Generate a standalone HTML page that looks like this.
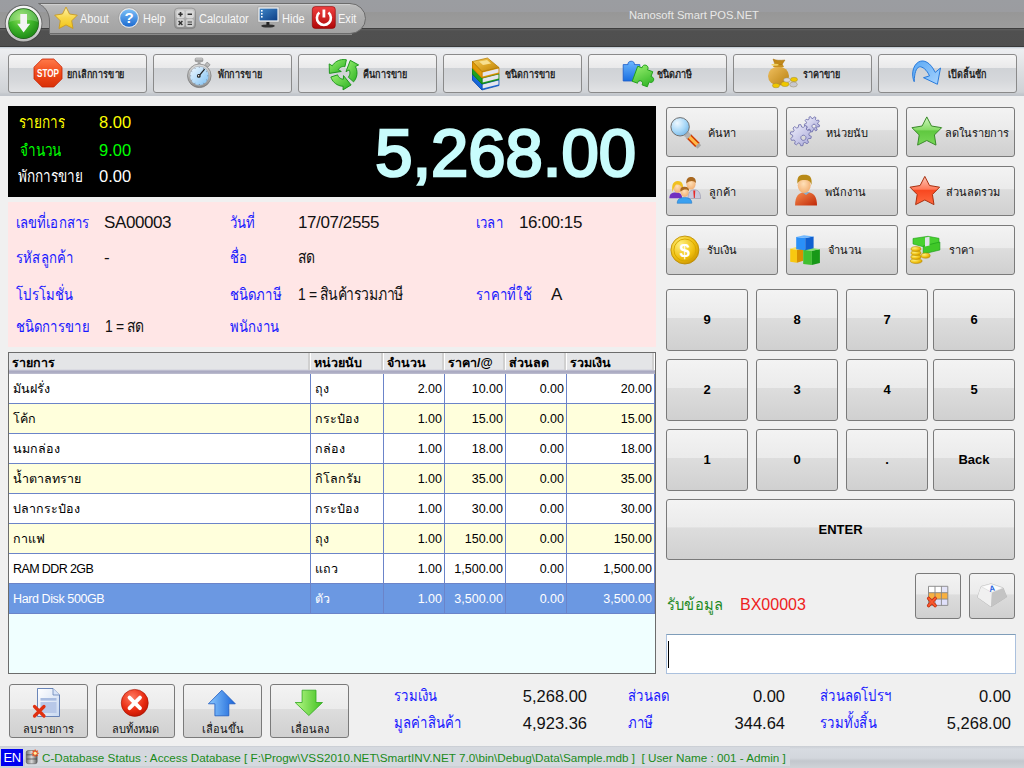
<!DOCTYPE html>
<html><head><meta charset="utf-8">
<style>
*{margin:0;padding:0;box-sizing:border-box}
html,body{width:1024px;height:768px;overflow:hidden;background:#f0f0f0;font-family:"Liberation Sans",sans-serif;position:relative}
.a{position:absolute}
#title{left:0;top:0;width:1024px;height:48px;background:linear-gradient(#9b9da1 0px,#9b9ca0 12px,#979797 12px,#9c9c9c 28.5px,#3e3e3e 28.5px,#3e3e3e 29.5px,#5c5c5c 29.5px,#505050 31px,#4f4f4f 46.5px,#3a3a3a 46.5px,#3a3a3a 47.5px,#c8d0d8 47.5px,#c8d0d8 48px)}
#apptitle{left:561px;top:9px;width:266px;text-align:center;font-size:11.2px;color:#e8e8e8}
.mi{font-size:12px;line-height:14px;color:#f6f6f6;top:12px;transform:scaleX(0.92);transform-origin:0 50%}
#tb{left:0;top:48px;width:1024px;height:48px;background:linear-gradient(#d8dde2 0px,#eceef1 1px,#e9eaec 8px,#dcdee1 24px,#cfd2d6 44px,#c4c8cd 46px,#c0c4ca 48px)}
.btn{position:absolute;border:1px solid #7a7a7a;border-radius:3px;background:linear-gradient(#f3f3f3 0%,#ebebeb 46%,#dddddd 47%,#d0d0d0 100%)}
.tbb{top:54px;width:139px;height:39px;border-color:#8a8a8a;background:linear-gradient(#f5f5f5 0%,#e9e9ea 35%,#cfd2d6 36%,#d6d8db 70%,#e2e3e5 100%)}
.tbt{position:absolute;top:12px;font-size:11px;color:#111}
#disp{left:8px;top:106px;width:648px;height:91px;background:#000}
.dl{font-size:16.5px}
#big{left:300px;top:117px;width:336px;text-align:right;font-size:67px;font-weight:normal;-webkit-text-stroke:2.6px #c8fcfc;color:#c8fcfc;line-height:72px}
#info{left:8px;top:202px;width:648px;height:145px;background:#ffe6e6}
.il{font-size:16px;color:#1a1aff}
.iv{font-size:17px;letter-spacing:-0.4px;color:#111}
#grid{left:8px;top:352px;width:648px;height:322px;border:1px solid #6c6c6c;background:#f0ffff;overflow:hidden}
.fb{width:112px;height:50px}
.kp{width:82px;height:62px;font-size:13px;font-weight:bold;text-align:center;line-height:60px;color:#000}
.bb{top:684px;width:79px;height:54px}
.sl{font-size:16px;color:#1a1aff}
.sv{font-size:16.5px;color:#111;text-align:right}
#status{left:0;top:746px;width:1024px;height:22px;background:linear-gradient(#c9cdd3 0,#d7dbe1 3px,#d3d7dd 12px,#c3c7cd 15px,#cfd3d8 22px)}
.gh{position:absolute;left:0;top:0;width:646px;height:21px;background:linear-gradient(#e4e5e7 0,#e4e5e7 16px,#d0d0dc 17px,#a8a8c0 18px,#b0b0c6 20px,#c4c4d4 21px)}
.ghc{position:absolute;top:0;height:17px;font-size:12.5px;line-height:21px;padding-left:3px;color:#000;font-weight:bold;border-right:1px solid #fff;box-shadow:inset -2px 0 0 #d0d0d0}
.gr{position:absolute;left:0;width:646px;height:30px;background:#fff;border-bottom:1px solid #6b84c9}
.gr.alt{background:#ffffdc}
.gr.sel{background:#6b98e2;color:#fff}
.gr.sel .gc{color:#fff}
.gc{position:absolute;top:0;height:29px;font-size:12.5px;line-height:31px;color:#000;border-right:1px solid #6b84c9;white-space:nowrap;overflow:hidden}
.gc.l{padding-left:4px}
.gc.r{text-align:right;padding-right:2px}
.tl{top:66px;font-size:11px;line-height:16px;color:#111;white-space:nowrap;-webkit-text-stroke:0.3px #111}
.fl{font-size:11px;line-height:16px;color:#111;white-space:nowrap}
.bl{top:721px;width:79px;text-align:center;font-size:11px;line-height:16px;color:#111;white-space:nowrap}
.sx{transform:scaleX(0.82);transform-origin:0 50%;white-space:nowrap}
</style></head><body>
<div id="title" class="a"></div>
<svg class="a" style="left:0;top:0" width="380" height="48" viewBox="0 0 380 48">
<defs>
<linearGradient id="pillg" x1="0" y1="0" x2="0" y2="1"><stop offset="0" stop-color="#c4c4c4"/><stop offset="0.12" stop-color="#b9b9b9"/><stop offset="0.45" stop-color="#acacac"/><stop offset="1" stop-color="#a3a3a3"/></linearGradient>
<linearGradient id="ringg" x1="0" y1="0" x2="0" y2="1"><stop offset="0" stop-color="#f8f8f8"/><stop offset="0.6" stop-color="#e0e0e0"/><stop offset="1" stop-color="#b8b8b8"/></linearGradient>
<radialGradient id="greeng" cx="0.4" cy="0.3" r="0.8"><stop offset="0" stop-color="#8ee05a"/><stop offset="0.5" stop-color="#3fb52a"/><stop offset="1" stop-color="#177f12"/></radialGradient>
<linearGradient id="starg" x1="0" y1="0" x2="0" y2="1"><stop offset="0" stop-color="#fff3b0"/><stop offset="0.5" stop-color="#f9d84a"/><stop offset="1" stop-color="#f0c419"/></linearGradient>
<linearGradient id="helpg" x1="0" y1="0" x2="0" y2="1"><stop offset="0" stop-color="#7cc0f8"/><stop offset="1" stop-color="#1c6ad0"/></linearGradient>
<linearGradient id="calcg" x1="0" y1="0" x2="0" y2="1"><stop offset="0" stop-color="#c9c9c9"/><stop offset="1" stop-color="#8e8e8e"/></linearGradient>
<linearGradient id="scrg" x1="0" y1="0" x2="1" y2="1"><stop offset="0" stop-color="#3f86c8"/><stop offset="1" stop-color="#0d3f86"/></linearGradient>
<linearGradient id="exitg" x1="0" y1="0" x2="0" y2="1"><stop offset="0" stop-color="#f04040"/><stop offset="1" stop-color="#b00808"/></linearGradient>
</defs>
<path d="M38.5,3.5 H350 A15.5,15 0 0 1 350,33.5 H49.5 V21 C49.5,12 44,6 38.5,3.5 Z" fill="url(#pillg)" stroke="#6c6c6c" stroke-width="1"/>
<path d="M41,4.5 H350" stroke="#cfcfcf" stroke-width="1"/>
<path d="M50,34.5 H352" stroke="#8a8a8a" stroke-width="1"/>
<circle cx="23.6" cy="23.6" r="18.8" fill="#3a3a3a" opacity="0.6"/>
<circle cx="23.6" cy="23.6" r="17.9" fill="url(#ringg)"/>
<circle cx="23.6" cy="23.6" r="15.3" fill="#1f5a18"/>
<circle cx="23.6" cy="23.6" r="14.7" fill="url(#greeng)"/>
<path d="M9.2,22 A14.5,14.5 0 0 1 38,22 C30,19 18,19 9.2,22 Z" fill="#ffffff" opacity="0.22"/>
<path d="M20.3,14 H27 V23.8 H30.2 L23.6,32.4 L17.2,23.8 H20.3 Z" fill="#f4f4f4"/>
<path d="M66.0,7.0 L69.5,14.0 L77.3,15.2 L71.7,20.8 L73.0,28.5 L66.0,24.9 L59.0,28.5 L60.3,20.8 L54.7,15.2 L62.5,14.0 Z" fill="url(#starg)" stroke="#c89a20" stroke-width="0.9" stroke-linejoin="round"/>
<circle cx="129" cy="18" r="10.4" fill="#e8e8e8" stroke="#8a8a8a" stroke-width="0.6"/>
<circle cx="129" cy="18" r="8.8" fill="url(#helpg)"/>
<text x="129" y="23.2" font-family="Liberation Sans" font-weight="bold" font-size="15" fill="#fff" text-anchor="middle">?</text>
<rect x="174.5" y="8.2" width="21" height="20.4" rx="3.5" fill="url(#calcg)" stroke="#7a7a7a" stroke-width="0.6"/>
<rect x="176.5" y="10.2" width="8" height="8" rx="2" fill="#d8d8d8"/><rect x="185.8" y="10.2" width="8" height="8" rx="2" fill="#d8d8d8"/>
<rect x="176.5" y="19" width="8" height="8" rx="2" fill="#cfcfcf"/><rect x="185.8" y="19" width="8" height="8" rx="2" fill="#cfcfcf"/>
<path d="M178.3,14.2 H182.7 M180.5,12 V16.4 M187.6,14.2 H192" stroke="#303030" stroke-width="1.6"/>
<path d="M178.6,21 L182.4,25 M182.4,21 L178.6,25" stroke="#303030" stroke-width="1.4"/>
<path d="M187.6,22 H192 M187.6,24.4 H192" stroke="#404040" stroke-width="1.1"/>
<rect x="258" y="7" width="21" height="15" fill="#f0f0f0" stroke="#9a9a9a" stroke-width="0.6"/>
<rect x="259.6" y="8.6" width="17.8" height="11.8" fill="url(#scrg)"/>
<rect x="261" y="10" width="1.6" height="1.6" fill="#fff"/><rect x="261" y="13" width="1.6" height="1.6" fill="#fff"/><rect x="261" y="16" width="1.6" height="1.6" fill="#fff"/>
<rect x="266.4" y="22" width="3" height="3" fill="#222"/>
<ellipse cx="268" cy="26" rx="6.8" ry="1.6" fill="#303030"/>
<rect x="312.3" y="6.6" width="23" height="21.8" rx="3" fill="url(#exitg)" stroke="#8a0000" stroke-width="0.6"/>
<path d="M319.4,12.6 A7,7 0 1 0 328.4,12.6" fill="none" stroke="#fff" stroke-width="2.6"/>
<path d="M323.9,9.5 V17.5" stroke="#fff" stroke-width="2.8"/>
</svg>
<div class="a mi" style="left:80px">About</div>
<div class="a mi" style="left:143px">Help</div>
<div class="a mi" style="left:199px">Calculator</div>
<div class="a mi" style="left:282px">Hide</div>
<div class="a mi" style="left:338px">Exit</div>
<div id="apptitle" class="a">Nanosoft Smart POS.NET</div>

<div id="tb" class="a"></div>
<div class="btn tbb" style="left:8px"></div>
<div class="btn tbb" style="left:153px"></div>
<div class="btn tbb" style="left:298px"></div>
<div class="btn tbb" style="left:443px"></div>
<div class="btn tbb" style="left:588px"></div>
<div class="btn tbb" style="left:733px"></div>
<div class="btn tbb" style="left:878px"></div>

<div id="disp" class="a"></div>
<div class="a dl sx" style="left:19px;top:112px;line-height:20px;color:#ffff00">รายการ</div>
<div class="a dl" style="left:99px;top:112px;line-height:20px;color:#ffff00">8.00</div>
<div class="a dl sx" style="left:20px;top:140px;line-height:20px;color:#00ff00">จำนวน</div>
<div class="a dl" style="left:99px;top:140px;line-height:20px;color:#00ff00">9.00</div>
<div class="a dl sx" style="left:18px;top:166px;line-height:20px;color:#ffffff">พักการขาย</div>
<div class="a dl" style="left:99px;top:166px;line-height:20px;color:#ffffff">0.00</div>
<div id="big" class="a">5,268.00</div>

<div id="info" class="a"></div>
<div class="a il sx" style="left:16px;top:213px;line-height:20px">เลขที่เอกสาร</div>
<div class="a iv" style="left:104px;top:213px;line-height:20px">SA00003</div>
<div class="a il sx" style="left:230px;top:213px;line-height:20px">วันที่</div>
<div class="a iv" style="left:298px;top:213px;line-height:20px">17/07/2555</div>
<div class="a il sx" style="left:476px;top:213px;line-height:20px">เวลา</div>
<div class="a iv" style="left:519px;top:213px;line-height:20px">16:00:15</div>
<div class="a il sx" style="left:16px;top:248px;line-height:20px">รหัสลูกค้า</div>
<div class="a iv" style="left:104px;top:248px;line-height:20px">-</div>
<div class="a il sx" style="left:230px;top:248px;line-height:20px">ชื่อ</div>
<div class="a iv sx" style="left:298px;top:248px;line-height:20px">สด</div>
<div class="a il sx" style="left:16px;top:285px;line-height:20px">โปรโมชั่น</div>
<div class="a il sx" style="left:230px;top:285px;line-height:20px">ชนิดภาษี</div>
<div class="a iv sx" style="left:298px;top:285px;line-height:20px">1 = สินค้ารวมภาษี</div>
<div class="a il sx" style="left:476px;top:285px;line-height:20px">ราคาที่ใช้</div>
<div class="a iv" style="left:551px;top:285px;line-height:20px">A</div>
<div class="a il sx" style="left:16px;top:317px;line-height:20px">ชนิดการขาย</div>
<div class="a iv sx" style="left:105px;top:317px;line-height:20px">1 = สด</div>
<div class="a il sx" style="left:230px;top:317px;line-height:20px">พนักงาน</div>

<div id="grid" class="a">
<div class="gh"></div>
<div class="ghc" style="left:0px;width:302px">รายการ</div>
<div class="ghc" style="left:302px;width:73px">หน่วยนับ</div>
<div class="ghc" style="left:375px;width:61px">จำนวน</div>
<div class="ghc" style="left:436px;width:61px">ราคา/@</div>
<div class="ghc" style="left:497px;width:61px">ส่วนลด</div>
<div class="ghc" style="left:558px;width:88px">รวมเงิน</div>
<div class="gr" style="top:21px">
<div class="gc l" style="left:0px;width:302px">มันฝรั่ง</div>
<div class="gc l" style="left:302px;width:73px">ถุง</div>
<div class="gc r" style="left:375px;width:61px">2.00</div>
<div class="gc r" style="left:436px;width:61px">10.00</div>
<div class="gc r" style="left:497px;width:61px">0.00</div>
<div class="gc r" style="left:558px;width:88px">20.00</div>
</div>
<div class="gr alt" style="top:51px">
<div class="gc l" style="left:0px;width:302px">โค้ก</div>
<div class="gc l" style="left:302px;width:73px">กระป๋อง</div>
<div class="gc r" style="left:375px;width:61px">1.00</div>
<div class="gc r" style="left:436px;width:61px">15.00</div>
<div class="gc r" style="left:497px;width:61px">0.00</div>
<div class="gc r" style="left:558px;width:88px">15.00</div>
</div>
<div class="gr" style="top:81px">
<div class="gc l" style="left:0px;width:302px">นมกล่อง</div>
<div class="gc l" style="left:302px;width:73px">กล่อง</div>
<div class="gc r" style="left:375px;width:61px">1.00</div>
<div class="gc r" style="left:436px;width:61px">18.00</div>
<div class="gc r" style="left:497px;width:61px">0.00</div>
<div class="gc r" style="left:558px;width:88px">18.00</div>
</div>
<div class="gr alt" style="top:111px">
<div class="gc l" style="left:0px;width:302px">น้ำตาลทราย</div>
<div class="gc l" style="left:302px;width:73px">กิโลกรัม</div>
<div class="gc r" style="left:375px;width:61px">1.00</div>
<div class="gc r" style="left:436px;width:61px">35.00</div>
<div class="gc r" style="left:497px;width:61px">0.00</div>
<div class="gc r" style="left:558px;width:88px">35.00</div>
</div>
<div class="gr" style="top:141px">
<div class="gc l" style="left:0px;width:302px">ปลากระป๋อง</div>
<div class="gc l" style="left:302px;width:73px">กระป๋อง</div>
<div class="gc r" style="left:375px;width:61px">1.00</div>
<div class="gc r" style="left:436px;width:61px">30.00</div>
<div class="gc r" style="left:497px;width:61px">0.00</div>
<div class="gc r" style="left:558px;width:88px">30.00</div>
</div>
<div class="gr alt" style="top:171px">
<div class="gc l" style="left:0px;width:302px">กาแฟ</div>
<div class="gc l" style="left:302px;width:73px">ถุง</div>
<div class="gc r" style="left:375px;width:61px">1.00</div>
<div class="gc r" style="left:436px;width:61px">150.00</div>
<div class="gc r" style="left:497px;width:61px">0.00</div>
<div class="gc r" style="left:558px;width:88px">150.00</div>
</div>
<div class="gr" style="top:201px">
<div class="gc l" style="left:0px;width:302px;letter-spacing:-0.6px">RAM DDR 2GB</div>
<div class="gc l" style="left:302px;width:73px">แถว</div>
<div class="gc r" style="left:375px;width:61px">1.00</div>
<div class="gc r" style="left:436px;width:61px">1,500.00</div>
<div class="gc r" style="left:497px;width:61px">0.00</div>
<div class="gc r" style="left:558px;width:88px">1,500.00</div>
</div>
<div class="gr sel" style="top:231px">
<div class="gc l" style="left:0px;width:302px;letter-spacing:-0.4px">Hard Disk 500GB</div>
<div class="gc l" style="left:302px;width:73px">ตัว</div>
<div class="gc r" style="left:375px;width:61px">1.00</div>
<div class="gc r" style="left:436px;width:61px">3,500.00</div>
<div class="gc r" style="left:497px;width:61px">0.00</div>
<div class="gc r" style="left:558px;width:88px">3,500.00</div>
</div>
</div>

<div class="btn fb" style="left:666px;top:107px"></div>
<div class="btn fb" style="left:786px;top:107px"></div>
<div class="btn fb" style="left:906px;top:107px;width:109px"></div>
<div class="btn fb" style="left:666px;top:166px"></div>
<div class="btn fb" style="left:786px;top:166px"></div>
<div class="btn fb" style="left:906px;top:166px;width:109px"></div>
<div class="btn fb" style="left:666px;top:225px"></div>
<div class="btn fb" style="left:786px;top:225px"></div>
<div class="btn fb" style="left:906px;top:225px;width:109px"></div>

<div class="btn kp" style="left:666px;top:289px">9</div>
<div class="btn kp" style="left:756px;top:289px">8</div>
<div class="btn kp" style="left:846px;top:289px">7</div>
<div class="btn kp" style="left:933px;top:289px">6</div>
<div class="btn kp" style="left:666px;top:359px">2</div>
<div class="btn kp" style="left:756px;top:359px">3</div>
<div class="btn kp" style="left:846px;top:359px">4</div>
<div class="btn kp" style="left:933px;top:359px">5</div>
<div class="btn kp" style="left:666px;top:429px">1</div>
<div class="btn kp" style="left:756px;top:429px">0</div>
<div class="btn kp" style="left:846px;top:429px">.</div>
<div class="btn kp" style="left:933px;top:429px">Back</div>
<div class="btn kp" style="left:666px;top:499px;width:349px;height:61px;line-height:59px">ENTER</div>

<div class="btn" style="left:915px;top:573px;width:46px;height:46px"></div>
<div class="btn" style="left:969px;top:573px;width:46px;height:46px"></div>
<div class="a" style="left:666px;top:634px;width:350px;height:40px;background:#fff;border:1px solid #abc1de;border-top-color:#7f9db9"></div>

<div class="btn bb" style="left:9px"></div>
<div class="btn bb" style="left:96px"></div>
<div class="btn bb" style="left:183px"></div>
<div class="btn bb" style="left:270px"></div>

<div class="a sl sx" style="left:394px;top:686px;line-height:20px">รวมเงิน</div>
<div class="a sv" style="left:487px;top:686px;width:100px;line-height:20px">5,268.00</div>
<div class="a sl sx" style="left:394px;top:713px;line-height:20px">มูลค่าสินค้า</div>
<div class="a sv" style="left:487px;top:713px;width:100px;line-height:20px">4,923.36</div>
<div class="a sl sx" style="left:628px;top:686px;line-height:20px">ส่วนลด</div>
<div class="a sv" style="left:685px;top:686px;width:100px;line-height:20px">0.00</div>
<div class="a sl sx" style="left:628px;top:713px;line-height:20px">ภาษี</div>
<div class="a sv" style="left:685px;top:713px;width:100px;line-height:20px">344.64</div>
<div class="a sl sx" style="left:820px;top:686px;line-height:20px">ส่วนลดโปรฯ</div>
<div class="a sv" style="left:911px;top:686px;width:100px;line-height:20px">0.00</div>
<div class="a sl sx" style="left:820px;top:713px;line-height:20px">รวมทั้งสิ้น</div>
<div class="a sv" style="left:911px;top:713px;width:100px;line-height:20px">5,268.00</div>
<div class="a" style="left:667px;top:595px;font-size:16px;line-height:20px;color:#1f8a1f;transform:scaleX(0.92);transform-origin:0 50%">รับข้อมูล</div>
<div class="a" style="left:740px;top:595px;font-size:16px;line-height:20px;color:#ee2020">BX00003</div>
<div class="a" style="left:668px;top:641px;width:1px;height:27px;background:#000"></div>
<div id="status" class="a"></div>
<div class="a" style="left:25px;top:747px;width:765px;height:19px;background:#d5d9df"></div>
<div class="a" style="left:1px;top:749px;width:22px;height:17px;background:#0000f0;color:#fff;font-size:13px;line-height:17px;text-align:center;letter-spacing:-0.6px">EN</div>
<div class="a" style="left:42px;top:748px;font-size:11.7px;line-height:20px;color:#1a8a1a;white-space:nowrap">C-Database Status : Access Database [ F:\Progw\VSS2010.NET\SmartINV.NET 7.0\bin\Debug\Data\Sample.mdb ]&nbsp; [ User Name : 001 - Admin ]</div>
<!--LABELS-->
<div class="a tl sx" style="left:67px">ยกเลิกการขาย</div>
<div class="a tl sx" style="left:218px">พักการขาย</div>
<div class="a tl sx" style="left:363px">คืนการขาย</div>
<div class="a tl sx" style="left:505px">ชนิดการขาย</div>
<div class="a tl sx" style="left:657px">ชนิดภาษี</div>
<div class="a tl sx" style="left:803px">ราคาขาย</div>
<div class="a tl sx" style="left:948px">เปิดลิ้นชัก</div>
<div class="a fl" style="left:708px;top:125px">ค้นหา</div>
<div class="a fl" style="left:826px;top:125px">หน่วยนับ</div>
<div class="a fl" style="left:945px;top:125px">ลดในรายการ</div>
<div class="a fl" style="left:709px;top:184px">ลูกค้า</div>
<div class="a fl" style="left:825px;top:184px">พนักงาน</div>
<div class="a fl" style="left:946px;top:184px">ส่วนลดรวม</div>
<div class="a fl" style="left:707px;top:242px">รับเงิน</div>
<div class="a fl" style="left:828px;top:242px">จำนวน</div>
<div class="a fl" style="left:949px;top:242px">ราคา</div>
<div class="a bl" style="left:9px">ลบรายการ</div>
<div class="a bl" style="left:96px">ลบทั้งหมด</div>
<div class="a bl" style="left:183px">เลื่อนขึ้น</div>
<div class="a bl" style="left:270px">เลื่อนลง</div>
<!--ICONS-->
<svg class="a" style="left:0;top:0;pointer-events:none" width="1024" height="768" viewBox="0 0 1024 768">
<defs>
<linearGradient id="g_stop" x1="0" y1="0" x2="0" y2="1"><stop offset="0" stop-color="#ff7a4a"/><stop offset="0.5" stop-color="#f04a1a"/><stop offset="1" stop-color="#d83008"/></linearGradient>
<linearGradient id="g_face" x1="0" y1="0" x2="1" y2="1"><stop offset="0" stop-color="#f4faff"/><stop offset="1" stop-color="#7cc0f4"/></linearGradient>
<linearGradient id="g_silver" x1="0" y1="0" x2="0" y2="1"><stop offset="0" stop-color="#e0e0e0"/><stop offset="1" stop-color="#8a8a8a"/></linearGradient>
<linearGradient id="g_green" x1="0" y1="0" x2="1" y2="1"><stop offset="0" stop-color="#9af070"/><stop offset="1" stop-color="#28b020"/></linearGradient>
<linearGradient id="g_blue" x1="0" y1="0" x2="0" y2="1"><stop offset="0" stop-color="#6cb8ff"/><stop offset="1" stop-color="#1a6ee0"/></linearGradient>
<linearGradient id="g_lblue" x1="0" y1="0" x2="1" y2="1"><stop offset="0" stop-color="#5aa8f4"/><stop offset="1" stop-color="#a8d4ff"/></linearGradient>
<linearGradient id="g_gold" x1="0" y1="0" x2="1" y2="1"><stop offset="0" stop-color="#f8d060"/><stop offset="0.6" stop-color="#d8a020"/><stop offset="1" stop-color="#b88010"/></linearGradient>
<radialGradient id="g_lens" cx="0.35" cy="0.3" r="0.75"><stop offset="0" stop-color="#eef8ff"/><stop offset="0.6" stop-color="#a8d8f8"/><stop offset="1" stop-color="#78b8e8"/></radialGradient>
<linearGradient id="g_orange" x1="0" y1="0" x2="1" y2="0"><stop offset="0" stop-color="#e84a10"/><stop offset="0.5" stop-color="#ffc060"/><stop offset="1" stop-color="#e84a10"/></linearGradient>
<linearGradient id="g_gear" x1="0" y1="0" x2="1" y2="1"><stop offset="0" stop-color="#f0f0fc"/><stop offset="1" stop-color="#a8a8d8"/></linearGradient>
<linearGradient id="g_gstar" x1="0" y1="0" x2="0" y2="1"><stop offset="0" stop-color="#d0f8c0"/><stop offset="0.45" stop-color="#88dc68"/><stop offset="0.5" stop-color="#60c840"/><stop offset="1" stop-color="#78d858"/></linearGradient>
<linearGradient id="g_rstar" x1="0" y1="0" x2="0" y2="1"><stop offset="0" stop-color="#ffc8b8"/><stop offset="0.45" stop-color="#ff7a5a"/><stop offset="0.5" stop-color="#f84820"/><stop offset="1" stop-color="#ff6a40"/></linearGradient>
<linearGradient id="g_body" x1="0" y1="0" x2="1" y2="1"><stop offset="0" stop-color="#f89050"/><stop offset="1" stop-color="#c02808"/></linearGradient>
<radialGradient id="g_skin" cx="0.45" cy="0.4" r="0.7"><stop offset="0" stop-color="#ffe0b8"/><stop offset="1" stop-color="#f0a868"/></radialGradient>
<radialGradient id="g_coin" cx="0.35" cy="0.3" r="0.8"><stop offset="0" stop-color="#fff080"/><stop offset="0.6" stop-color="#f0c010"/><stop offset="1" stop-color="#c89000"/></radialGradient>
<radialGradient id="g_redball" cx="0.4" cy="0.3" r="0.8"><stop offset="0" stop-color="#ff7a60"/><stop offset="0.6" stop-color="#e82a10"/><stop offset="1" stop-color="#b81000"/></radialGradient>
<linearGradient id="g_doc" x1="0" y1="0" x2="1" y2="1"><stop offset="0" stop-color="#ffffff"/><stop offset="1" stop-color="#c8d8f0"/></linearGradient>
<linearGradient id="g_uparrow" x1="0" y1="0" x2="1" y2="0"><stop offset="0" stop-color="#8ccaff"/><stop offset="1" stop-color="#1a64d8"/></linearGradient>
<linearGradient id="g_dnarrow" x1="0" y1="0" x2="1" y2="0"><stop offset="0" stop-color="#b8f888"/><stop offset="1" stop-color="#40c020"/></linearGradient>
<linearGradient id="g_key" x1="0" y1="0" x2="0" y2="1"><stop offset="0" stop-color="#ffffff"/><stop offset="1" stop-color="#c8c8c8"/></linearGradient>
<linearGradient id="g_sack" x1="0" y1="0" x2="1" y2="1"><stop offset="0" stop-color="#f0c060"/><stop offset="1" stop-color="#b88010"/></linearGradient>
</defs>
<polygon points="42.2,59.0 53.8,59.0 62.0,67.2 62.0,78.8 53.8,87.0 42.2,87.0 34.0,78.8 34.0,67.2" fill="url(#g_stop)" stroke="#c82000" stroke-width="0.8"/>
<text x="48" y="77.2" font-family="Liberation Sans" font-weight="bold" font-size="11" fill="#fff" text-anchor="middle" textLength="22" lengthAdjust="spacingAndGlyphs">STOP</text>
<rect x="195.1" y="58" width="7.8" height="3.6" rx="1.2" fill="url(#g_silver)" stroke="#777" stroke-width="0.5"/>
<rect x="197.6" y="61.4" width="3" height="3" fill="#aaa"/>
<rect x="205.5" y="63" width="4" height="3.4" fill="#bbb" stroke="#777" stroke-width="0.5" transform="rotate(40 207.5 64.7)"/>
<circle cx="199.3" cy="75.8" r="11.8" fill="url(#g_silver)" stroke="#6a6a6a" stroke-width="0.6"/>
<circle cx="199.3" cy="75.8" r="9.6" fill="url(#g_face)" stroke="#9a9a9a" stroke-width="0.5"/>
<line x1="207.50" y1="75.80" x2="208.30" y2="75.80" stroke="#556" stroke-width="0.7"/>
<line x1="206.40" y1="79.90" x2="207.09" y2="80.30" stroke="#556" stroke-width="0.7"/>
<line x1="203.40" y1="82.90" x2="203.80" y2="83.59" stroke="#556" stroke-width="0.7"/>
<line x1="199.30" y1="84.00" x2="199.30" y2="84.80" stroke="#556" stroke-width="0.7"/>
<line x1="195.20" y1="82.90" x2="194.80" y2="83.59" stroke="#556" stroke-width="0.7"/>
<line x1="192.20" y1="79.90" x2="191.51" y2="80.30" stroke="#556" stroke-width="0.7"/>
<line x1="191.10" y1="75.80" x2="190.30" y2="75.80" stroke="#556" stroke-width="0.7"/>
<line x1="192.20" y1="71.70" x2="191.51" y2="71.30" stroke="#556" stroke-width="0.7"/>
<line x1="195.20" y1="68.70" x2="194.80" y2="68.01" stroke="#556" stroke-width="0.7"/>
<line x1="199.30" y1="67.60" x2="199.30" y2="66.80" stroke="#556" stroke-width="0.7"/>
<line x1="203.40" y1="68.70" x2="203.80" y2="68.01" stroke="#556" stroke-width="0.7"/>
<line x1="206.40" y1="71.70" x2="207.09" y2="71.30" stroke="#556" stroke-width="0.7"/>
<line x1="199" y1="75.8" x2="204.6" y2="69.2" stroke="#222" stroke-width="1.3"/>
<circle cx="198.8" cy="75.9" r="1.9" fill="#222"/><circle cx="198.6" cy="75.7" r="0.8" fill="#fff"/>
<polygon points="346.39,59.79 344.77,59.55 343.13,59.51 341.50,59.66 339.91,60.02 338.36,60.57 336.90,61.30 335.54,62.20 334.29,63.26 333.19,64.47 332.24,65.80 329.18,63.89 329.41,73.40 341.31,71.47 338.26,69.56 338.70,68.94 339.22,68.37 339.81,67.87 340.45,67.44 341.14,67.10 341.86,66.84 342.61,66.68 343.38,66.60 344.15,66.62 344.91,66.74" fill="url(#g_green)" stroke="#149014" stroke-width="0.9" stroke-linejoin="round"/>
<polygon points="353.56,81.87 354.58,80.59 355.43,79.19 356.11,77.70 356.60,76.14 356.90,74.53 357.00,72.90 356.90,71.27 356.60,69.66 356.11,68.10 355.43,66.61 358.61,64.92 350.27,60.36 345.98,71.63 349.16,69.94 349.48,70.64 349.71,71.38 349.85,72.13 349.90,72.90 349.85,73.67 349.71,74.42 349.48,75.16 349.16,75.86 348.76,76.51 348.28,77.12" fill="url(#g_green)" stroke="#149014" stroke-width="0.9" stroke-linejoin="round"/>
<polygon points="330.86,77.04 331.46,78.56 332.24,80.00 333.19,81.33 334.29,82.54 335.54,83.60 336.90,84.50 338.36,85.23 339.91,85.78 341.50,86.14 343.13,86.29 343.01,89.89 351.12,84.94 343.51,75.60 343.38,79.20 342.61,79.12 341.86,78.96 341.14,78.70 340.45,78.36 339.81,77.93 339.22,77.43 338.70,76.86 338.26,76.24 337.89,75.56 337.61,74.85" fill="url(#g_green)" stroke="#149014" stroke-width="0.9" stroke-linejoin="round"/>
<polygon points="472.50,73.50 482.00,83.50 499.00,79.50 499.00,85.50 482.00,90.00 472.50,80.00" fill="#1868d8" stroke="#0a48b0" stroke-width="0.7" stroke-linejoin="round"/>
<polygon points="482.50,84.50 498.50,80.50 498.50,84.60 482.50,88.60" fill="#e4e4ee"/>
<polygon points="472.50,73.50 482.00,83.50 482.00,90.00 472.50,80.00" fill="#1868d8" stroke="#0a48b0" stroke-width="0.7" stroke-linejoin="round"/>
<polygon points="472.50,67.50 482.00,77.50 499.00,73.50 499.00,79.50 482.00,84.00 472.50,74.00" fill="#20a020" stroke="#108010" stroke-width="0.7" stroke-linejoin="round"/>
<polygon points="482.50,78.50 498.50,74.50 498.50,78.60 482.50,82.60" fill="#e4e4ee"/>
<polygon points="472.50,67.50 482.00,77.50 482.00,84.00 472.50,74.00" fill="#20a020" stroke="#108010" stroke-width="0.7" stroke-linejoin="round"/>
<polygon points="472.50,61.50 482.00,71.50 499.00,67.50 499.00,73.50 482.00,78.00 472.50,68.00" fill="#e09a08" stroke="#c07800" stroke-width="0.7" stroke-linejoin="round"/>
<polygon points="482.50,72.50 498.50,68.50 498.50,72.60 482.50,76.60" fill="#e4e4ee"/>
<polygon points="472.50,61.50 482.00,71.50 482.00,78.00 472.50,68.00" fill="#e09a08" stroke="#c07800" stroke-width="0.7" stroke-linejoin="round"/>
<polygon points="472.50,61.50 487.50,58.00 499.00,67.50 482.00,71.50" fill="url(#g_gold)" stroke="#b07800" stroke-width="0.7" stroke-linejoin="round"/>
<polygon points="479.00,61.50 487.00,60.00 491.00,63.50 483.00,65.00" fill="#f8e090"/>
<path transform="translate(623.2,64.6)" d="M0,0 H4.8 C4,-4.5 12,-4.5 11.2,0 H16.6 V16.4 H0 Z" fill="url(#g_blue)" stroke="#1a5ac8" stroke-width="0.8" stroke-linejoin="round"/>
<path transform="translate(634.5,68.5) rotate(20 8 8)" d="M0,0 H4.6 C3.6,-5 11.4,-5 10.4,0 H16 V5.2 C21,4.2 21,11.8 16,10.8 V16 H10.4 C11.4,11.5 4.6,11.5 5.6,16 H0 Z" fill="url(#g_green)" stroke="#22a01a" stroke-width="0.9" stroke-linejoin="round"/>
<ellipse cx="778.5" cy="76" rx="10.5" ry="9.6" fill="url(#g_sack)"/>
<path d="M775,63 L782,63 L784,67 L773,67 Z" fill="#c89020"/>
<path d="M773,59 C776,60.5 780,60.5 785,60 L782,64.5 L775,64.5 Z" fill="#c08818" stroke="#a87010" stroke-width="0.5"/>
<ellipse cx="775" cy="64.8" rx="3.6" ry="1" fill="#f0d060"/>
<ellipse cx="776" cy="85.5" rx="3.6" ry="2.3" fill="#f0c800" stroke="#8a7a40" stroke-width="0.4"/>
<ellipse cx="785" cy="84" rx="4" ry="2.6" fill="#f0c800" stroke="#8a7a40" stroke-width="0.4"/>
<ellipse cx="787" cy="80" rx="3.5" ry="2.2" fill="#d8d8e0" stroke="#8a7a40" stroke-width="0.4"/>
<ellipse cx="794" cy="79.5" rx="3.5" ry="2.2" fill="#f0c800" stroke="#8a7a40" stroke-width="0.4"/>
<ellipse cx="793.5" cy="84.5" rx="3.8" ry="2.5" fill="#c8c8d0" stroke="#8a7a40" stroke-width="0.4"/>
<path d="M914.2,81.7 C911.5,76 912,66 918.5,62 C924,59 930.5,62.5 935.2,72.4 L940.5,68 L937.4,84.3 L923.5,77.7 L929.5,75.9 C927,70 922.5,66.2 919.3,67 C916,67.8 914.5,73 914.2,81.7 Z" fill="url(#g_lblue)" stroke="#1a70d8" stroke-width="0.9" stroke-linejoin="round"/>
<circle cx="680.1" cy="126.8" r="9.2" fill="url(#g_lens)" stroke="#707070" stroke-width="1"/>
<line x1="688.6" y1="136.1" x2="697.6" y2="145.1" stroke="#d03a00" stroke-width="6.2"/>
<line x1="688.6" y1="136.1" x2="697.6" y2="145.1" stroke="#ffb848" stroke-width="3"/>
<line x1="686.3" y1="133.8" x2="689.3" y2="136.8" stroke="#b4b4b4" stroke-width="6"/>
<line x1="686.3" y1="133.8" x2="689.3" y2="136.8" stroke="#a0a0a0" stroke-width="6" stroke-dasharray="0.6 3.4"/>
<line x1="697.2" y1="144.7" x2="699.4" y2="146.9" stroke="#a8a8a8" stroke-width="5"/>
<path d="M817.80,124.20 L819.64,125.17 L819.24,126.83 L817.16,126.85 L816.44,127.93 L817.23,129.85 L815.85,130.87 L814.25,129.55 L813.01,129.91 L812.38,131.89 L810.66,131.78 L810.28,129.74 L809.10,129.22 L807.34,130.33 L806.10,129.15 L807.12,127.34 L806.55,126.18 L804.49,125.91 L804.30,124.20 L806.25,123.47 L806.55,122.22 L805.15,120.68 L806.10,119.25 L808.06,119.94 L809.10,119.18 L809.02,117.10 L810.66,116.62 L811.72,118.41 L813.01,118.49 L814.28,116.84 L815.85,117.53 L815.51,119.58 L816.44,120.47 L818.47,120.03 L819.24,121.57 L817.66,122.92 Z M814.00,124.20 a2.00,2.00 0 1 0 0.01,0 Z" fill="url(#g_gear)" fill-rule="evenodd" stroke="#6a6aa8" stroke-width="0.8" stroke-linejoin="round"/>
<path d="M809.00,135.20 L811.33,136.40 L810.88,138.48 L808.26,138.60 L807.43,140.02 L808.62,142.36 L807.03,143.78 L804.84,142.34 L803.33,143.00 L802.92,145.59 L800.80,145.80 L799.87,143.35 L798.27,143.00 L796.41,144.85 L794.57,143.78 L795.26,141.25 L794.17,140.02 L791.58,140.42 L790.72,138.48 L792.77,136.84 L792.60,135.20 L790.27,134.00 L790.72,131.92 L793.34,131.80 L794.17,130.38 L792.98,128.04 L794.57,126.62 L796.76,128.06 L798.27,127.40 L798.68,124.81 L800.80,124.60 L801.73,127.05 L803.33,127.40 L805.19,125.55 L807.03,126.62 L806.34,129.15 L807.43,130.38 L810.02,129.98 L810.88,131.92 L808.83,133.56 Z M803.40,135.20 a2.60,2.60 0 1 0 0.01,0 Z" fill="url(#g_gear)" fill-rule="evenodd" stroke="#6a6aa8" stroke-width="0.8" stroke-linejoin="round"/>
<polygon points="926.80,116.90 931.50,126.03 941.64,127.68 934.41,134.97 935.97,145.12 926.80,140.50 917.63,145.12 919.19,134.97 911.96,127.68 922.10,126.03" fill="url(#g_gstar)" stroke="#3a8a2a" stroke-width="1" stroke-linejoin="round"/>
<polygon points="924.80,176.40 929.50,185.53 939.64,187.18 932.41,194.47 933.97,204.62 924.80,200.00 915.63,204.62 917.19,194.47 909.96,187.18 920.10,185.53" fill="url(#g_rstar)" stroke="#a83010" stroke-width="1" stroke-linejoin="round"/>
<path d="M688,198.5 C688,192 690.5,189.8 694.3,189.8 C698,189.8 700.6,192 700.6,198.5 Z" fill="#c8c8dc" stroke="#8888a0" stroke-width="0.5"/>
<path d="M693.3,190.5 L695.3,190.5 L694.8,198 L693.8,198 Z" fill="#e82828"/>
<ellipse cx="691" cy="184" rx="4.6" ry="5.6" fill="url(#g_skin)"/>
<path d="M686.3,183.5 C686,178 689,177 691,177 C694,177 696,178.5 696,183 C694,180.5 690,180 686.3,183.5 Z" fill="#a86820"/>
<path d="M669.4,198.2 C669.4,194 671.5,192.4 675.8,192.4 C680,192.4 682.1,194 682.1,198.2 Z" fill="#7030c0"/>
<ellipse cx="677.7" cy="187.4" rx="4.3" ry="5.3" fill="url(#g_skin)"/>
<path d="M672.5,192 C671.5,186 672.5,181 677.8,181 C683,181 683.5,186 683,190 C682,186 680,184 676,184.5 C674.5,186 673.5,189 672.5,192 Z" fill="#f0c020"/>
<path d="M677.2,203.3 C677.2,199.5 679.5,197.6 684.5,197.6 C689.5,197.6 691.8,199.5 691.8,203.3 Z" fill="#3aa0f0" stroke="#1a70c0" stroke-width="0.5"/>
<ellipse cx="684.7" cy="192.2" rx="4" ry="4.8" fill="url(#g_skin)"/>
<path d="M680.5,191.5 C680,188 681.5,186.8 684.7,186.8 C688,186.8 689.3,188.5 689,191 C687.5,189 684,188.5 680.5,191.5 Z" fill="#a86820"/>
<path d="M795.1,205.4 C795,197 798,191.9 806,191.9 C814,191.9 817,197 817,205.4 Z" fill="url(#g_body)"/>
<path d="M802,192 L810,192 L806,195 Z" fill="#8ab0d0"/>
<ellipse cx="804.2" cy="185.3" rx="6.5" ry="7.6" fill="url(#g_skin)"/>
<path d="M797.5,184 C796.5,176 800,174.8 804.5,174.8 C809.5,174.8 812.5,177 811.5,185 C810.5,181 808,179.5 804,180 C800,180 798.5,181.5 797.5,184 Z" fill="#b88a18"/>
<circle cx="684.9" cy="250" r="14" fill="url(#g_coin)" stroke="#b88800" stroke-width="0.8"/>
<circle cx="684.9" cy="250" r="11" fill="none" stroke="#d8a800" stroke-width="1"/>
<text x="684.9" y="257" font-family="Liberation Sans" font-weight="bold" font-size="19" fill="#fff" text-anchor="middle">$</text>
<polygon points="790.20,248.81 796.96,249.81 796.96,262.80 790.20,261.80" fill="#f8c810"/>
<polygon points="796.96,249.81 803.20,248.31 803.20,260.80 796.96,262.80" fill="#d89000"/>
<polygon points="790.20,248.81 796.05,246.90 803.20,248.31 796.96,249.81" fill="#ffe060"/>
<polygon points="803.20,249.76 811.88,250.76 811.88,264.90 803.20,263.90" fill="#40c030"/>
<polygon points="811.88,250.76 819.90,249.26 819.90,262.90 811.88,264.90" fill="#189818"/>
<polygon points="803.20,249.76 810.72,247.70 819.90,249.26 811.88,250.76" fill="#80e068"/>
<polygon points="796.20,237.01 805.25,238.01 805.25,250.30 796.20,249.30" fill="#2a90f8"/>
<polygon points="805.25,238.01 813.60,236.51 813.60,248.30 805.25,250.30" fill="#1060d0"/>
<polygon points="796.20,237.01 804.03,235.20 813.60,236.51 805.25,238.01" fill="#70b8ff"/>
<polygon points="913.00,238.50 928.00,236.30 939.00,238.30 939.00,244.00 924.00,247.00 913.00,244.00" fill="#48d030" stroke="#20a018" stroke-width="0.6" stroke-linejoin="round"/>
<polygon points="923.20,246.00 939.90,242.00 939.90,250.00 923.20,254.00" fill="#40c828" stroke="#189818" stroke-width="0.6" stroke-linejoin="round"/>
<polygon points="925.00,237.50 929.50,236.80 929.50,245.50 925.00,246.50" fill="#e0e0e8"/>
<ellipse cx="916.2" cy="261" rx="6" ry="2.6" fill="url(#g_coin)" stroke="#b08800" stroke-width="0.5"/>
<ellipse cx="916" cy="257" rx="5.2" ry="2.4" fill="url(#g_coin)" stroke="#b08800" stroke-width="0.5"/>
<ellipse cx="916" cy="253" rx="5" ry="2.4" fill="url(#g_coin)" stroke="#b08800" stroke-width="0.5"/>
<ellipse cx="916" cy="249" rx="5" ry="2.4" fill="url(#g_coin)" stroke="#b08800" stroke-width="0.5"/>
<ellipse cx="925.6" cy="255.6" rx="4.6" ry="2.6" fill="url(#g_coin)" stroke="#b08800" stroke-width="0.5"/>
<path d="M37.5,688.5 H53 L59.5,695 V716.5 H37.5 Z" fill="url(#g_doc)" stroke="#5a78b0" stroke-width="0.9"/>
<path d="M53,688.5 V695 H59.5" fill="#d8e4f8" stroke="#5a78b0" stroke-width="0.7"/>
<rect x="40.5" y="698" width="16" height="2.6" fill="#a8bce0"/><rect x="40.5" y="702" width="16" height="11" fill="#b8c8e8"/>
<path d="M34.5,706.5 L44,716 M44,706.5 L34.5,716" stroke="#e03010" stroke-width="3.2" stroke-linecap="round"/>
<circle cx="134.75" cy="702.9" r="13.5" fill="url(#g_redball)" stroke="#a01000" stroke-width="0.6"/>
<path d="M129.5,697.6 L140,708.2 M140,697.6 L129.5,708.2" stroke="#fff" stroke-width="3.8" stroke-linecap="round"/>
<path d="M221.85,690.2 L235.3,703.8 L228.8,703.8 L228.8,715.8 L214.9,715.8 L214.9,703.8 L208.4,703.8 Z" fill="url(#g_uparrow)" stroke="#1a58c0" stroke-width="0.8" stroke-linejoin="round"/>
<path d="M302.1,690.2 L316,690.2 L316,702.5 L322.5,702.5 L308.85,715.5 L295.2,702.5 L302.1,702.5 Z" fill="url(#g_dnarrow)" stroke="#30a820" stroke-width="0.8" stroke-linejoin="round"/>
<rect x="928.5" y="586.3" width="19.3" height="19.1" fill="#ffffff"/>
<rect x="941.4" y="586.3" width="6.4" height="6.4" fill="#e4e4f8"/>
<rect x="928.5" y="592.7" width="19.3" height="6.4" fill="#f8b040"/>
<rect x="935" y="599.1" width="12.8" height="6.3" fill="#e0e0fa"/>
<path d="M928.5,586.3 H947.8 V605.4 H928.5 Z M935,586.3 V605.4 M941.4,586.3 V605.4 M928.5,592.7 H947.8 M928.5,599.1 H947.8" fill="none" stroke="#858585" stroke-width="0.9"/>
<path d="M928.6,598.4 L935.2,605.6 M935.2,598.4 L928.6,605.6" stroke="#c02808" stroke-width="3.4" stroke-linecap="round"/>
<path d="M928.6,598.4 L935.2,605.6 M935.2,598.4 L928.6,605.6" stroke="#f85a30" stroke-width="2" stroke-linecap="round"/>
<path d="M981.1,586.5 L991,583.8 L1003.1,587.9 L1006.7,596.9 L991,606.8 L977.5,597.3 Z" fill="#d4d4d4" stroke="#9a9a9a" stroke-width="0.5" stroke-linejoin="round"/>
<path d="M977.5,597.3 L981.1,586.5 L991.9,592.4 L991,606.8 Z" fill="#f0f0f0"/>
<path d="M991.9,592.4 L1003.1,587.9 L1006.7,596.9 L991,606.8 Z" fill="#c4c4c4"/>
<path d="M981.1,586.5 L991,583.8 L1003.1,587.9 L991.9,592.4 Z" fill="#fbfbfb" stroke="#d0d0d0" stroke-width="0.4"/>
<text x="992" y="591.3" font-family="Liberation Sans" font-weight="bold" font-style="italic" font-size="8" fill="#1a60e0" text-anchor="middle" transform="rotate(-18 992 588.5)">A</text>
<defs><linearGradient id="g_cyl" x1="0" y1="0" x2="1" y2="0"><stop offset="0" stop-color="#707070"/><stop offset="0.5" stop-color="#d8d8d8"/><stop offset="1" stop-color="#606060"/></linearGradient></defs>
<rect x="26.2" y="750.5" width="11" height="13.2" rx="2" fill="url(#g_cyl)" stroke="#505050" stroke-width="0.5"/>
<path d="M26.5,754.8 H37 M26.5,759 H37" stroke="#404040" stroke-width="0.7"/>
<path d="M35.2,749.6 V756.8 M31.6,753.2 H38.8 M32.6,750.6 L37.8,755.8 M37.8,750.6 L32.6,755.8" stroke="#ff4a10" stroke-width="1.1"/>
<circle cx="35.2" cy="753.2" r="1.5" fill="#fff2a0"/>
</svg>
<!--/ICONS-->
</body></html>
